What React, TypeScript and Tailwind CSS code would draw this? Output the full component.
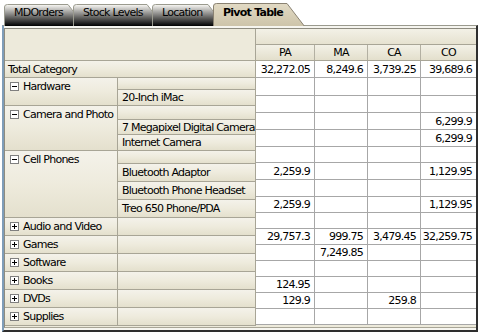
import React from "react";

const FONT = "font-['DejaVu_Sans',sans-serif]";

type Tab = { label: string; w: number; active?: boolean };
const tabs: Tab[] = [
  { label: "MDOrders", w: 70 },
  { label: "Stock Levels", w: 80 },
  { label: "Location", w: 62 },
  { label: "Pivot Table", w: 80, active: true },
];

function TabShape({ w, active }: { w: number; active?: boolean }) {
  const top = active ? 3 : 4;
  const bottom = 26;
  const slope = 0.75;
  const rt = w - 6;
  const rb = rt + (bottom - top) * slope;
  const d = `M0.5 ${bottom} L0.5 ${top + 3} Q0.5 ${top + 0.5} 3.5 ${top + 0.5} L${rt} ${top + 0.5} L${rb} ${bottom}`;
  return (
    <svg
      className="absolute left-0 top-0 pointer-events-none"
      width={rb + 2}
      height={bottom + 1}
      viewBox={`0 0 ${rb + 2} ${bottom + 1}`}
    >
      <defs>
        <linearGradient id={active ? "ga" : "gi"} x1="0" y1="0" x2="0" y2="1">
          {active ? (
            <>
              <stop offset="0" stopColor="#e2dac4" />
              <stop offset="1" stopColor="#cdc4aa" />
            </>
          ) : (
            <>
              <stop offset="0" stopColor="#fbfaf6" />
              <stop offset="1" stopColor="#ecead e" />
            </>
          )}
        </linearGradient>
      </defs>
      <path d={d + " Z"} fill={active ? "url(#ga)" : "url(#gi)"} />
      <path d={d} fill="none" stroke={active ? "#8a8272" : "#9a9a8e"} strokeWidth="1" />
    </svg>
  );
}

function Box({ plus }: { plus?: boolean }) {
  return (
    <svg width="9" height="9" viewBox="0 0 9 9" className="shrink-0">
      <rect x="0.5" y="0.5" width="8" height="8" fill="#ffffff" stroke="#7f7f7f" />
      <line x1="2" y1="4.5" x2="7" y2="4.5" stroke="#000" />
      {plus && <line x1="4.5" y1="2" x2="4.5" y2="7" stroke="#000" />}
    </svg>
  );
}

type Group = { name: string; plus?: boolean; subs: { label: string; h: number }[] };
const groups: Group[] = [
  { name: "Hardware", subs: [{ label: "", h: 12 }, { label: "20-Inch iMac", h: 16 }] },
  {
    name: "Camera and Photo",
    subs: [
      { label: "", h: 14 },
      { label: "7 Megapixel Digital Camera", h: 15 },
      { label: "Internet Camera", h: 16 },
    ],
  },
  {
    name: "Cell Phones",
    subs: [
      { label: "", h: 13 },
      { label: "Bluetooth Adaptor", h: 18 },
      { label: "Bluetooth Phone Headset", h: 18 },
      { label: "Treo 650 Phone/PDA", h: 18 },
    ],
  },
  { name: "Audio and Video", plus: true, subs: [{ label: "", h: 18 }] },
  { name: "Games", plus: true, subs: [{ label: "", h: 18 }] },
  { name: "Software", plus: true, subs: [{ label: "", h: 18 }] },
  { name: "Books", plus: true, subs: [{ label: "", h: 18 }] },
  { name: "DVDs", plus: true, subs: [{ label: "", h: 18 }] },
  { name: "Supplies", plus: true, subs: [{ label: "", h: 18 }] },
];

const valueRows: { h: number; v: string[] }[] = [
  { h: 18, v: ["", "", "", ""] },
  { h: 17, v: ["", "", "", ""] },
  { h: 17, v: ["", "", "", "6,299.9"] },
  { h: 17, v: ["", "", "", "6,299.9"] },
  { h: 16, v: ["", "", "", ""] },
  { h: 17, v: ["2,259.9", "", "", "1,129.95"] },
  { h: 17, v: ["", "", "", ""] },
  { h: 16, v: ["2,259.9", "", "", "1,129.95"] },
  { h: 16, v: ["", "", "", ""] },
  { h: 16, v: ["29,757.3", "999.75", "3,479.45", "32,259.75"] },
  { h: 16, v: ["", "7,249.85", "", ""] },
  { h: 16, v: ["", "", "", ""] },
  { h: 16, v: ["124.95", "", "", ""] },
  { h: 16, v: ["129.9", "", "259.8", ""] },
  { h: 16, v: ["", "", "", ""] },
];

const colW = ["w-[59px]", "w-[53px]", "w-[53px]", "w-[55px]"];
const HDR = "bg-gradient-to-b from-[#f4f2ea] via-[#eeebdd] to-[#e4e0cd]";

function ValueRow({ h, v }: { h: number; v: string[] }) {
  return (
    <div className="flex box-border" style={{ height: h }}>
      {v.map((t, i) => (
        <div
          key={i}
          className={`${colW[i]} ${i < 3 ? "border-r" : ""} border-b border-[#a7a7a7] bg-white flex items-center justify-end pr-[4px] box-border`}
        >
          {t}
        </div>
      ))}
    </div>
  );
}

export default function App() {
  return (
    <div className={`w-[478px] h-[333px] bg-white overflow-hidden ${FONT} text-[11px] tracking-[-0.75px] text-black leading-none`}>
      {/* Tab strip */}
      <div className="flex h-[25px] pl-[4px] relative z-10">
        {tabs.map((t, i) => (
          <div
            key={t.label}
            className="relative h-[26px] shrink-0"
            style={{ width: t.w, marginLeft: i === 0 ? 0 : -1 }}
          >
            <TabShape w={t.w} active={t.active} />
            <div
              className={`relative flex items-center h-full pb-[2px] pl-[10px] whitespace-nowrap ${t.active ? "font-bold" : ""}`}
            >
              {t.label}
            </div>
          </div>
        ))}
      </div>

      {/* Panel */}
      <div className="ml-[2px] h-[307px] border-t border-[#9a9a8e] border-l-2 border-l-[#7f9db9] border-b-2 border-b-[#2e2e2e] border-r-2 border-r-[#2e2e2e] bg-[#f6f5ef] box-border">
        <div className="mt-[2px] border-l border-t border-[#8e8c80] bg-[#edeadb] pb-[1px] border-b border-b-[#a8a596]">
          {/* header */}
          <div className="flex h-[32px] border-b border-[#a8a596] box-border">
            <div className="w-[250px] bg-[#edeadb]" />
            <div className="flex-1 flex flex-col border-l border-[#a8a596]">
              <div className="h-[16px] border-b border-[#a8a596] bg-gradient-to-b from-[#f3f1e7] to-[#e6e2d0] box-border" />
              <div className="flex h-[15px] bg-gradient-to-b from-[#f3f1e7] to-[#e3dfcc]">
                {["PA", "MA", "CA", "CO"].map((c, i) => (
                  <div
                    key={c}
                    className={`${colW[i]} ${i < 3 ? "border-r border-[#b3b0a2]" : ""} flex items-center justify-center box-border`}
                  >
                    {c}
                  </div>
                ))}
              </div>
            </div>
          </div>

          {/* body */}
          <div className="flex">
            {/* row headers */}
            <div className="w-[250px] flex flex-col">
              <div className={`h-[17px] border-b border-[#a8a596] flex items-center pl-[3px] box-border ${HDR}`}>
                Total Category
              </div>
              {groups.map((g) => (
                <div key={g.name} className="flex">
                  <div className={`w-[113px] border-r border-b border-[#a8a596] flex items-start gap-[4px] pl-[5px] pt-[4px] box-border whitespace-nowrap ${HDR}`}>
                    <Box plus={g.plus} />
                    <span className="-mt-[1px]">{g.name}</span>
                  </div>
                  <div className="w-[137px] flex flex-col">
                    {g.subs.map((s, i) => (
                      <div
                        key={i}
                        className={`border-b border-[#a8a596] flex items-center pl-[4px] box-border whitespace-nowrap ${HDR}`}
                        style={{ height: s.h }}
                      >
                        {s.label}
                      </div>
                    ))}
                  </div>
                </div>
              ))}
            </div>
            {/* values */}
            <div className="flex flex-col border-l border-[#a8a596]">
              <ValueRow h={17} v={["32,272.05", "8,249.6", "3,739.25", "39,689.6"]} />
              {valueRows.map((r, i) => (
                <ValueRow key={i} h={r.h} v={r.v} />
              ))}
            </div>
          </div>
        </div>
      </div>
    </div>
  );
}
